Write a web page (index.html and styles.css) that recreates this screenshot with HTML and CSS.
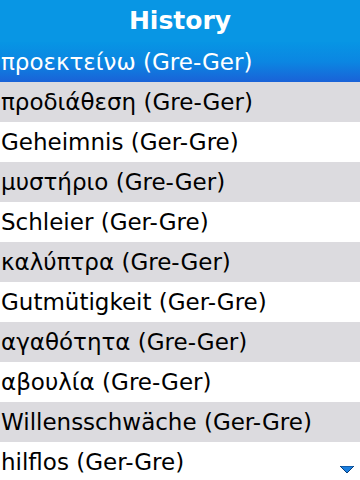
FILE: index.html
```html
<!DOCTYPE html>
<html><head><title>History</title>
<meta charset="utf-8">
<link rel="stylesheet" href="styles.css">
</head>
<body>
<div class="screen">
  <div class="title">History</div>
  <ul class="list">
    <li class="sel">προεκτείνω (Gre-Ger)</li>
    <li class="odd">προδιάθεση (Gre-Ger)</li>
    <li>Geheimnis (Ger-Gre)</li>
    <li class="odd">μυστήριο (Gre-Ger)</li>
    <li>Schleier (Ger-Gre)</li>
    <li class="odd">καλύπτρα (Gre-Ger)</li>
    <li>Gutmütigkeit (Ger-Gre)</li>
    <li class="odd">αγαθότητα (Gre-Ger)</li>
    <li>αβουλία (Gre-Ger)</li>
    <li class="odd">Willensschwäche (Ger-Gre)</li>
    <li>hilflos (Ger-Gre)</li>
  </ul>
  <svg class="more" width="14" height="8" viewBox="0 0 14 8"><polygon points="0,0 14,0 7,7" fill="#1a7fe0" stroke="#0b3f7a" stroke-width="1"/></svg>
</div>
</body>
</html>
```

FILE: styles.css
```css
body {
  margin: 0;
  background: #ffffff;
  font-family: "DejaVu Sans", sans-serif;
}

.screen {
  position: relative;
  width: 360px;
  height: 480px;
  overflow: hidden;
}

.title {
  height: 42px;
  line-height: 42px;
  background: #0896e4;
  color: #ffffff;
  font-size: 25px;
  font-weight: bold;
  text-align: center;
}

.list {
  list-style: none;
  margin: 0;
  padding: 0;
}

.list li {
  height: 40px;
  line-height: 40px;
  padding-left: 1px;
  font-size: 23px;
  color: #000000;
  white-space: nowrap;
}

.list li.odd { background: #dcdbdf; }

.list li.sel {
  color: #ffffff;
  background: linear-gradient(to bottom, #0795e4 0%, #0b86e2 50%, #1a62d8 100%);
}

.more {
  position: absolute;
  right: 6px;
  bottom: 6px;
}
```
